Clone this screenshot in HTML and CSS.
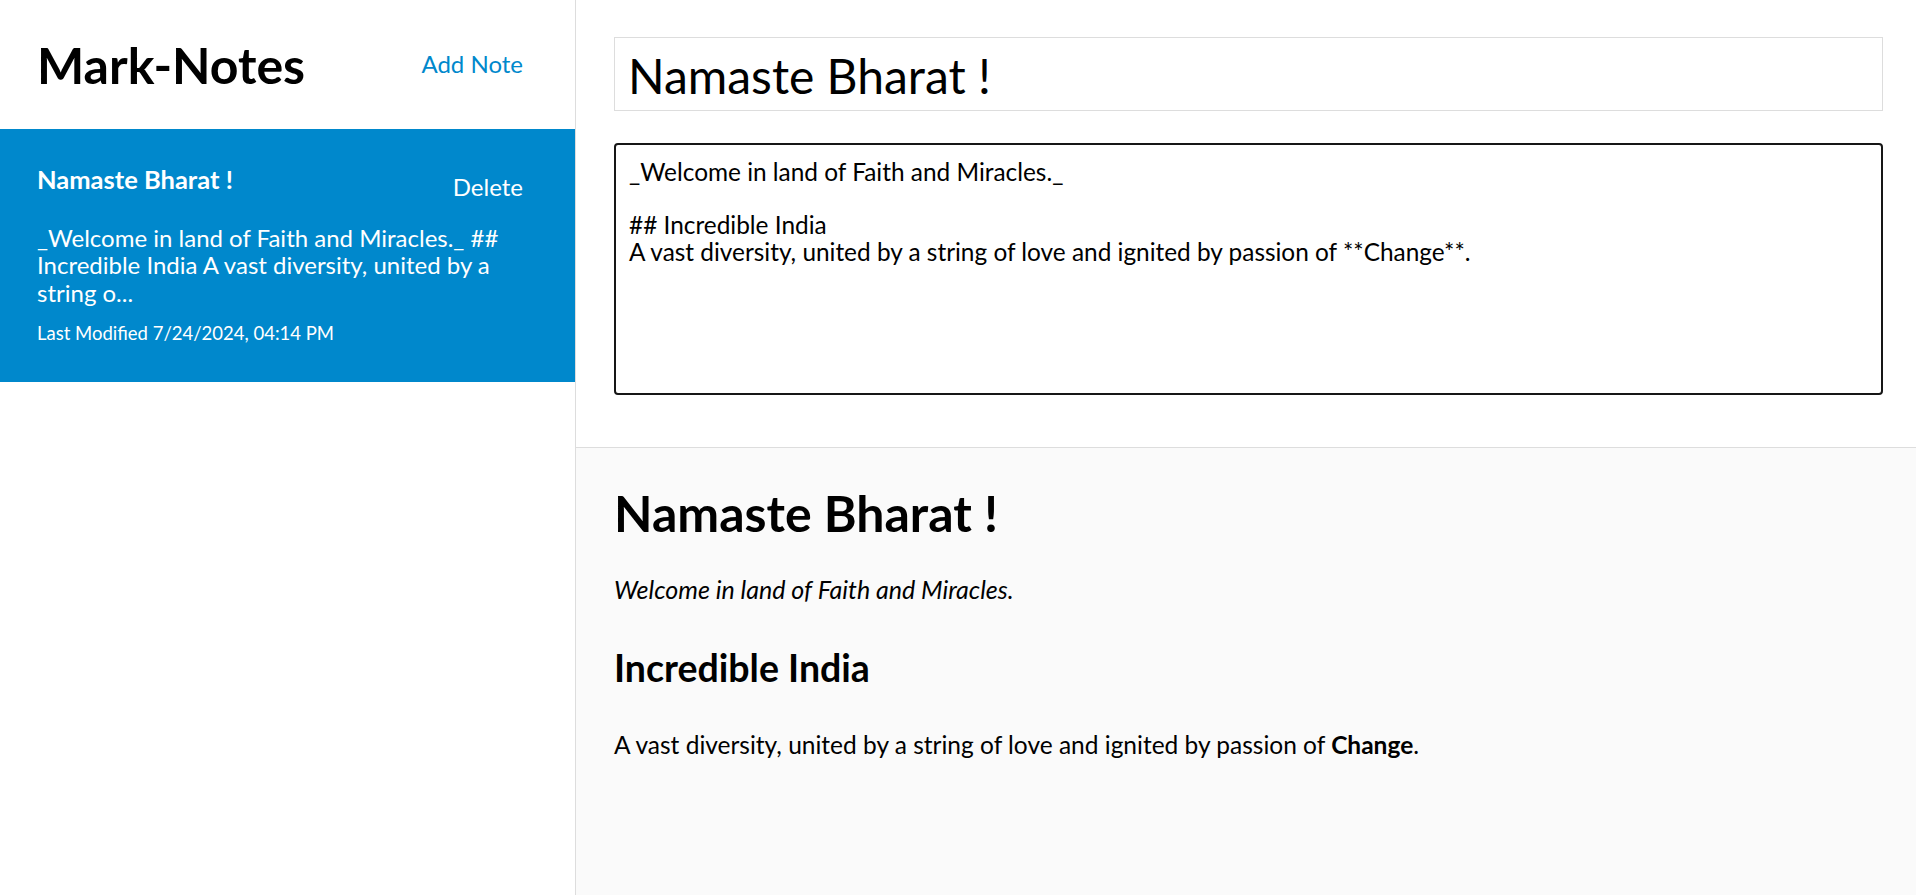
FILE: index.html
```html
<!DOCTYPE html>
<html lang="en">
<head>
<meta charset="utf-8">
<title>Mark-Notes</title>
<link rel="stylesheet" href="styles.css">
</head>
<body>
<div class="app">
  <aside class="sidebar">
    <header class="sidebar-header">
      <h1 class="brand">Mark-Notes</h1>
      <button class="add-btn" type="button">Add Note</button>
    </header>
    <div class="notes">
      <div class="note active">
        <div class="note-title">
          <strong class="note-name">Namaste Bharat !</strong>
          <button class="delete-btn" type="button">Delete</button>
        </div>
        <p class="note-excerpt">_Welcome in land of Faith and Miracles._ ## Incredible India A vast diversity, united by a string o...</p>
        <small class="note-meta">Last Modified 7/24/2024, 04:14 PM</small>
      </div>
    </div>
  </aside>
  <main class="main">
    <section class="edit">
      <input class="title-input" type="text" value="Namaste Bharat !">
      <textarea class="body-input">_Welcome in land of Faith and Miracles._

## Incredible India
A vast diversity, united by a string of love and ignited by passion of **Change**.</textarea>
    </section>
    <section class="preview">
      <h1 class="preview-title">Namaste Bharat !</h1>
      <div class="markdown">
        <p class="md-italic"><em>Welcome in land of Faith and Miracles.</em></p>
        <h2 class="md-h2">Incredible India</h2>
        <p class="md-para">A vast diversity, united by a string of love and ignited by passion of <strong>Change</strong>.</p>
      </div>
    </section>
  </main>
</div>
</body>
</html>
```
FILE: styles.css
```css
* { box-sizing: border-box; }

body {
  margin: 0;
  font-family: Lato, "Open Sans", sans-serif;
  font-size: 24px;
  color: #000;
  background: #fff;
}

.app {
  display: flex;
  height: 100vh;
  overflow: hidden;
}

/* Sidebar */
.sidebar {
  width: 576px;
  flex: none;
  border-right: 1px solid #ddd;
  display: flex;
  flex-direction: column;
}

.sidebar-header {
  height: 129px;
  display: flex;
  justify-content: space-between;
  align-items: center;
  padding: 0 52px 0 37px;
}

.brand {
  margin: 0;
  font-size: 50px;
  font-weight: 700;
  line-height: 1.2;
}

.add-btn,
.delete-btn {
  background: none;
  border: 0;
  padding: 0;
  font-family: inherit;
  font-size: 24px;
  line-height: 1.2;
  cursor: pointer;
}

.add-btn { color: #08c; }

.note {
  padding: 35px 52px 37px 37px;
}

.note.active {
  background: #08c;
  color: #fff;
}

.note-title {
  display: flex;
  justify-content: space-between;
  align-items: flex-start;
}

.note-name {
  font-size: 25.5px;
  font-weight: 700;
  line-height: 1.2;
}

.delete-btn {
  margin: 9px 0 -8px;
  color: #fff;
}

.note-excerpt {
  margin: 29px 0 16px;
  line-height: 27.5px;
}

.note-meta {
  display: block;
  font-size: 18.5px;
  line-height: 23px;
}

/* Main */
.main {
  flex: 1;
  min-width: 0;
  display: flex;
  flex-direction: column;
}

.edit {
  height: 447px;
  flex: none;
  padding: 37px 33px 0 38px;
}

.title-input {
  display: block;
  width: 100%;
  height: 74px;
  margin: 0 0 32px;
  padding: 2px 13px 0;
  border: 1px solid #ddd;
  font-family: inherit;
  font-size: 48px;
  color: #000;
  background: #fff;
  outline: none;
}

.body-input {
  display: block;
  width: 100%;
  height: 252px;
  margin: 0;
  padding: 14px 13px;
  border: 2px solid #161616;
  border-radius: 4px;
  font-family: inherit;
  font-size: 24.4px;
  line-height: 26.7px;
  color: #000;
  background: #fff;
  resize: none;
  outline: none;
  overflow: hidden;
}

.preview {
  flex: 1;
  border-top: 1px solid #ddd;
  background: #fafafa;
  padding: 35px 33px 0 38px;
  overflow: hidden;
}

.preview-title {
  margin: 0;
  font-size: 50px;
  font-weight: 700;
  line-height: 1.2;
}

.md-italic {
  margin: 31px 0 0;
  font-size: 25px;
  line-height: 1.2;
}

.md-h2 {
  margin: 41px 0 0;
  font-size: 37.5px;
  font-weight: 700;
  line-height: 1.2;
}

.md-para {
  margin: 40px 0 0;
  font-size: 24.5px;
  line-height: 1.2;
}
```
